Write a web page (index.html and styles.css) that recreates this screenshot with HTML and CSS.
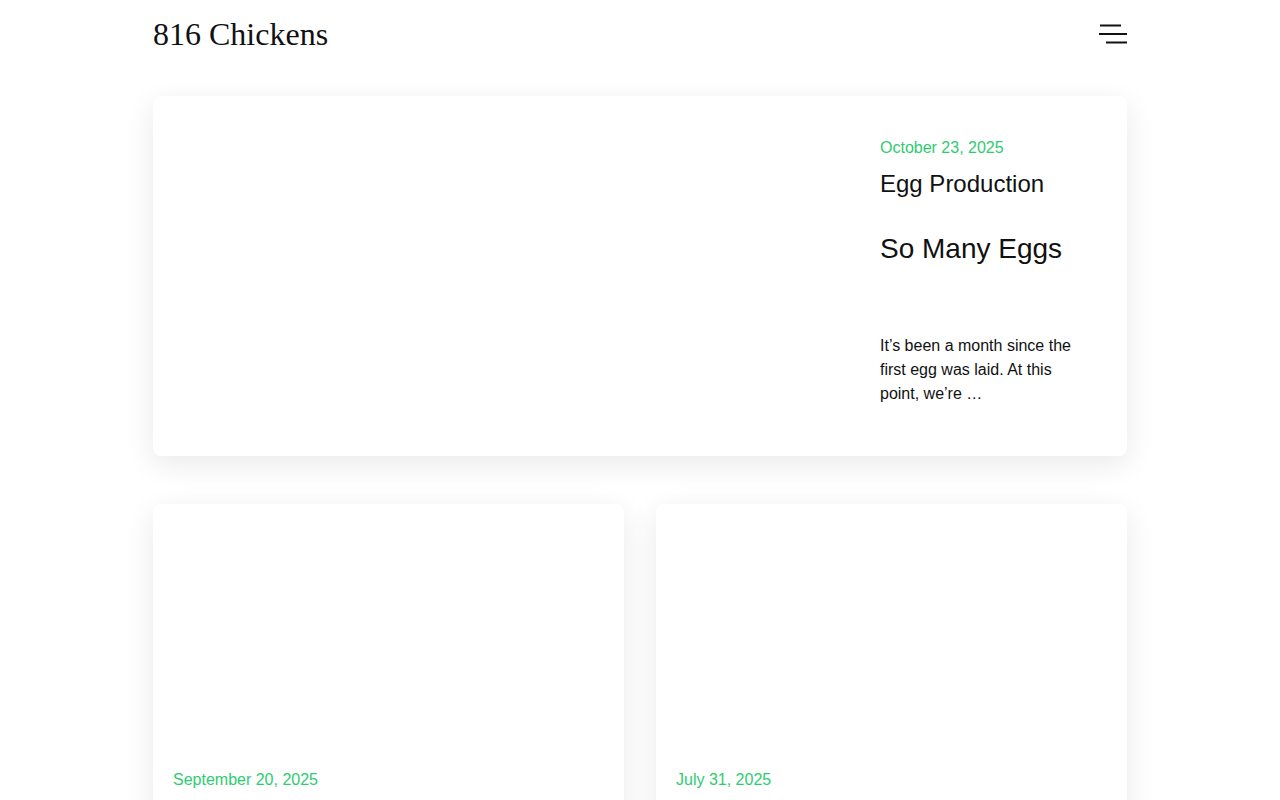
FILE: index.html
```html
<!DOCTYPE html>
<html>
<head>
<title>816 Chickens</title>
<meta charset="utf-8">
<link rel="stylesheet" href="styles.css">
</head>
<body>

<header class="site-header">
    <a class="site-title" href="#">816 Chickens</a>
    <button class="menu-toggle" aria-label="Menu">
        <svg width="28" height="20" viewBox="0 0 28 20">
            <line x1="1" y1="1.5" x2="22" y2="1.5" />
            <line x1="0" y1="10" x2="28" y2="10" />
            <line x1="7" y1="18.5" x2="28" y2="18.5" />
        </svg>
    </button>
</header>

<main class="posts">

    <article class="post-card featured">
        <div class="post-image"></div>
        <div class="post-body">
            <p class="post-date">October 23, 2025</p>
            <p class="post-category">Egg Production</p>
            <h2 class="post-title">So Many Eggs</h2>
            <p class="post-excerpt">It’s been a month since the first egg was laid. At this point, we’re …</p>
        </div>
    </article>

    <div class="post-grid">
        <article class="post-card">
            <div class="post-image"></div>
            <div class="post-body">
                <p class="post-date">September 20, 2025</p>
            </div>
        </article>
        <article class="post-card">
            <div class="post-image"></div>
            <div class="post-body">
                <p class="post-date">July 31, 2025</p>
            </div>
        </article>
    </div>

</main>

</body>
</html>
```

FILE: styles.css
```css
body {
    margin: 0;
    background-color: #ffffff;
    color: #111111;
    font-family: "Liberation Sans", Arial, sans-serif;
}

.site-header {
    width: 974px;
    height: 67px;
    margin: 0 auto;
    display: flex;
    align-items: center;
    justify-content: space-between;
}

.site-title {
    padding-top: 2px;
    font-family: "Liberation Serif", "Times New Roman", serif;
    font-size: 32px;
    color: #111111;
    text-decoration: none;
}

.menu-toggle {
    background: none;
    border: 0;
    padding: 0;
    width: 28px;
    height: 20px;
    display: block;
}

.menu-toggle svg {
    display: block;
}

.menu-toggle line {
    stroke: #111111;
    stroke-width: 2;
}

.posts {
    width: 974px;
    margin: 29px auto 0;
    display: flex;
    flex-direction: column;
    gap: 48px;
}

.post-card {
    background-color: #ffffff;
    border-radius: 8px;
    box-shadow: 0 8px 30px rgba(0, 0, 0, 0.09);
    overflow: hidden;
}

.post-card.featured {
    display: grid;
    grid-template-columns: 1fr 247px;
    height: 360px;
}

.post-grid {
    display: grid;
    grid-template-columns: 1fr 1fr;
    gap: 32px;
}

.post-grid .post-image {
    height: 243px;
}

.post-grid .post-body {
    padding: 21px 20px 60px;
}

.featured .post-body {
    padding: 40px 40px 40px 0;
}

.post-date {
    margin: 0;
    font-size: 16px;
    line-height: 24px;
    color: #2ecc71;
}

.post-category {
    margin: 9px 0 0;
    font-size: 24px;
    line-height: 30px;
}

.post-title {
    margin: 33px 0 0;
    font-size: 28px;
    line-height: 34px;
    font-weight: normal;
}

.post-excerpt {
    margin: 68px 0 0;
    font-size: 16px;
    line-height: 24px;
}
```
